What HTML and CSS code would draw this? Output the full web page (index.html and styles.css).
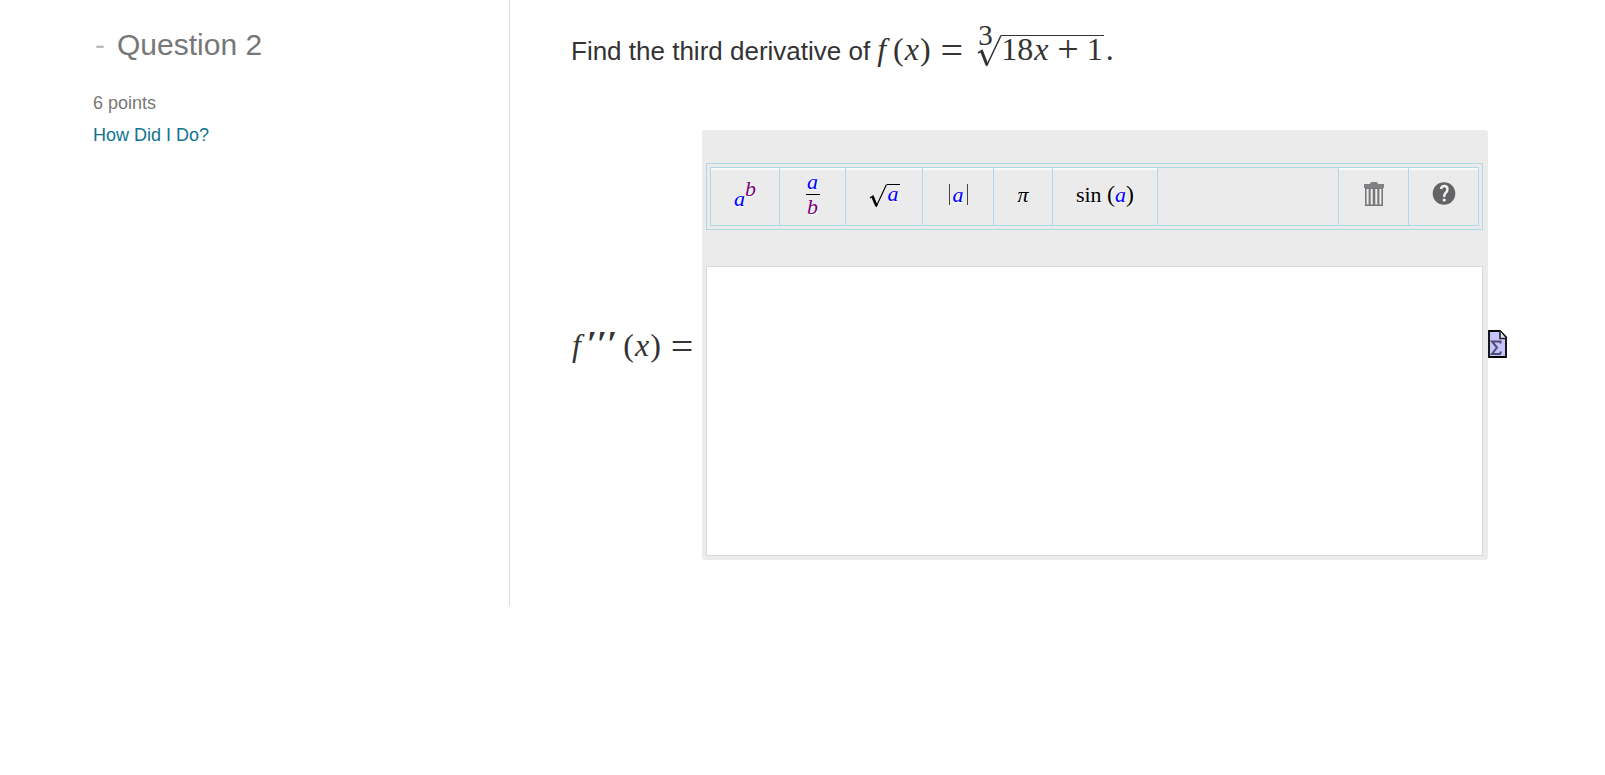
FILE: index.html
```html
<!DOCTYPE html>
<html lang="en">
<head>
  <meta charset="utf-8">
  <title>Question 2</title>
  <link rel="stylesheet" href="styles.css">
</head>
<body>
  <div class="question">
    <aside class="sidebar">
      <h2 class="title"><span class="dash">-</span>Question 2</h2>
      <p class="points">6 points</p>
      <a class="help-link" href="#">How Did I Do?</a>
    </aside>

    <main class="content">
      <p class="prompt">
        <span>Find the third derivative of</span>
        <span class="math"><i>f</i><span class="arg">(<i>x</i>)</span><span class="equals">=</span><span class="root">
            <span class="root-index">3</span>
            <svg class="root-sign" width="24" height="25" viewBox="0 0 24 25">
              <path d="M1 18 L5 15.500 L10 30 L24 .5" fill="none" stroke="#333" stroke-width="1.500"/>
              <path d="M4.500 16 L10 30" stroke="#333" stroke-width="3"/>
            </svg>
            <span class="radicand">18<i>x</i><span class="plus">+</span>1</span>
          </span><span class="period">.</span></span>
      </p>

      <div class="answer">
        <label class="math answer-label" for="answer"><i>f</i><span class="primes">′′′</span><span class="arg">(<i>x</i>)</span><span class="equals">=</span></label>

        <div class="editor">
          <div class="toolbar">
            <div class="tools">
              <button type="button" class="tool"><span class="power"><i class="a">a</i><i class="b">b</i></span></button>
              <button type="button" class="tool"><span class="fraction"><i class="a">a</i><i class="b">b</i></span></button>
              <button type="button" class="tool">
                <span class="sqrt">
                  <svg width="18" height="24" viewBox="0 0 18 24">
                    <path d="M1 14 L4 12 L7.500 22 L17.500 .5" fill="none" stroke="#000" stroke-width="1.200"/>
                    <path d="M3.500 12.500 L7.500 22" stroke="#000" stroke-width="2.600"/>
                  </svg>
                  <i class="a">a</i>
                </span>
              </button>
              <button type="button" class="tool"><span class="abs"><i class="a">a</i></span></button>
              <button type="button" class="tool"><i class="pi">π</i></button>
              <button type="button" class="tool"><span class="sine">sin <span class="paren">(</span><i class="a">a</i><span class="paren">)</span></span></button>
              <div class="spacer"></div>
              <button type="button" class="tool" aria-label="Clear">
                <svg width="22" height="26" viewBox="0 0 22 26">
                  <path d="M1 3 H21 V7 H1Z" fill="#808184"/>
                  <path d="M7 3 Q7 1 9 1 H13 Q15 1 15 3" fill="#808184"/>
                  <rect x="2" y="7" width="18" height="18" fill="#77787b"/>
                  <path d="M4.600 8 V23.500 M8.700 8 V23.500 M13.300 8 V23.500 M17.400 8 V23.500" stroke="#eee" stroke-width="2"/>
                </svg>
              </button>
              <button type="button" class="tool" aria-label="Help">
                <svg width="24" height="26" viewBox="0 0 24 26">
                  <circle cx="12" cy="12.500" r="11.300" fill="#636466"/>
                  <path d="M9 8 Q9.500 5 12.200 5 Q15.500 5 15.500 8.300 Q15.500 10.500 13.500 12 Q12.200 13 12.200 16" fill="none" stroke="#f4f4f4" stroke-width="2.400"/>
                  <circle cx="12.200" cy="19" r="1.600" fill="#f4f4f4"/>
                </svg>
              </button>
            </div>
          </div>
          <textarea class="entry" id="answer"></textarea>
        </div>

        <button type="button" class="preview" aria-label="Preview">
          <svg width="19" height="28" viewBox="0 0 19 28">
            <path d="M1 1 H12 L18 7 V27 H1Z" fill="#c5c2fc" stroke="#000" stroke-width="1.800"/>
            <path d="M12 1 V8.500 H18" fill="#e4e3f5" stroke="#222" stroke-width="1.600"/>
            <path d="M12.500 13.500 V11.500 H4 L9 17.500 L4 24 H12 L13 21.500" fill="none" stroke="#4e4c70" stroke-width="2"/>
          </svg>
        </button>
      </div>
    </main>
  </div>
</body>
</html>
```
FILE: styles.css
```css
body {
  margin: 0;
  background: #fff;
  color: #333;
  font-family: "Liberation Sans", Arial, sans-serif;
}

button {
  margin: 0;
  padding: 0;
  border: none;
  background: none;
  font: inherit;
  cursor: pointer;
}

svg {
  display: block;
}

.question {
  display: flex;
}

.sidebar {
  box-sizing: border-box;
  flex: 0 0 510px;
  min-height: 606px;
  padding: 28px 24px 0 93px;
  border-right: 1px solid #dcdcdc;
  color: #777;
  font-size: 18px;
  line-height: 32px;
}

.title {
  margin: 0 0 25px;
  padding-left: 2px;
  font-size: 30px;
  font-weight: normal;
  line-height: 34px;
}

.dash {
  display: inline-block;
  width: 22px;
  color: #bbb;
}

.points {
  margin: 0;
}

.help-link {
  color: #0e7490;
  text-decoration: none;
}

.content {
  flex: 1;
  min-width: 0;
  padding: 23px 98px 0 61px;
}

.prompt {
  display: flex;
  align-items: baseline;
  gap: 6px;
  margin: 0;
  height: 107px;
  font-size: 26px;
  line-height: 52px;
}

.math {
  font-family: "Liberation Serif", "Times New Roman", serif;
  font-size: 32px;
  line-height: 52px;
  white-space: nowrap;
}

.math i {
  padding: 0 1px;
}

.arg {
  margin-left: 6px;
}

.equals {
  margin-left: 10px;
  font-size: 40px;
  line-height: 32px;
  vertical-align: -4px;
}

.root {
  position: relative;
  display: inline-flex;
  align-items: baseline;
  margin-left: 14px;
}

.root-index {
  position: absolute;
  top: -20px;
  left: 1px;
  font-size: 29px;
  line-height: 40px;
}

/* the foot of the sign hangs below the baseline */
.root-sign {
  overflow: visible;
}

.radicand {
  padding-right: 1px;
  border-top: 1px solid #333;
  line-height: 26px;
}

.plus {
  padding: 0 8px;
  font-size: 38px;
  line-height: 24px;
  vertical-align: -2px;
}

.period {
  margin-left: 2px;
}

.answer {
  display: flex;
  align-items: center;
}

.answer-label {
  flex: 0 0 131px;
}

.primes {
  margin-left: 5px;
  font-size: 36px;
  font-weight: bold;
  line-height: 32px;
}

.editor {
  box-sizing: border-box;
  flex: 1;
  min-width: 0;
  padding: 33px 5px 4px 4px;
  border-radius: 3px;
  background: #ebebeb;
}

.toolbar {
  margin-bottom: 36px;
  padding: 3px;
  border: 1px solid #add8e6;
}

.tools {
  display: grid;
  grid-template-columns: 69px 66px 77px 71px 59px 105px 1fr 70px 69px;
  height: 57px;
  border: 1px solid #add8e6;
}

.tool {
  display: flex;
  align-items: center;
  justify-content: center;
  padding-bottom: 5px;
  border-right: 1px solid #add8e6;
  box-shadow: inset 0 2px 1px #fafafa;
  color: #000;
  font-family: "Liberation Serif", "Times New Roman", serif;
  font-size: 22px;
  line-height: 24px;
  text-shadow: 1px 1px 1px #fff;
}

.tool:last-child {
  border-right: none;
}

.spacer {
  border-right: 1px solid #add8e6;
}

.a {
  color: #00f;
}

.b {
  color: #800080;
}

.power {
  display: flex;
}

.power .a {
  padding-top: 10px;
}

.power .b {
  margin-bottom: 10px;
}

.fraction {
  display: grid;
  justify-items: center;
  width: 14px;
}

.fraction .b {
  width: 14px;
  border-top: 1px solid #000;
}

.sqrt {
  display: flex;
  padding-top: 4px;
}

.sqrt .a {
  width: 13px;
  height: 20px;
  border-top: 1px solid #000;
  line-height: 18px;
}

.abs {
  padding: 0 3px;
  border: 1px solid #444;
  border-width: 0 1px;
  line-height: 21px;
}

.pi {
  padding-top: 2px;
}

.sine {
  white-space: nowrap;
}

.paren {
  font-size: 24px;
}

.entry {
  display: block;
  box-sizing: border-box;
  width: 100%;
  height: 290px;
  padding: 8px;
  border: 1px solid #d8d8d8;
  background: #fff;
  font-size: 22px;
  resize: none;
  outline: none;
}

.preview {
  flex: none;
  padding-bottom: 2px;
}
```
